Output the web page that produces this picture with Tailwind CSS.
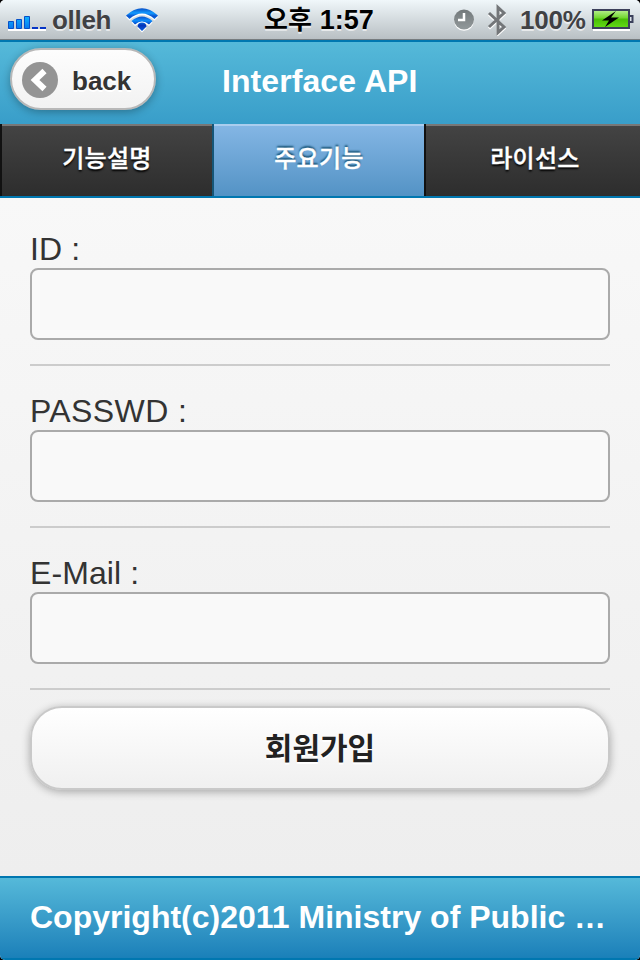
<!DOCTYPE html>
<html lang="ko">
<head>
<meta charset="utf-8">
<title>Interface API</title>
<script src="https://cdn.jsdelivr.net/npm/@tailwindcss/browser@4"></script>
</head>
<body class="bg-black">
<div class="w-[640px] h-[960px] flex flex-col overflow-hidden rounded-[5px] bg-[#f0f0f0] font-['Liberation_Sans','Noto_Sans_CJK_KR',sans-serif] text-[#333]">
  <div class="h-10 shrink-0 flex items-center border-b border-[#777c7f] bg-linear-to-b from-[#f0f7fa] to-[#b9c0c4] font-bold text-[#404144] [text-shadow:0_2px_0_rgba(255,255,255,.6)] whitespace-nowrap">
    <svg class="ml-[7px] w-10 h-6 shrink-0" viewBox="0 0 40 24">
      <defs><linearGradient id="sig" x1="0" y1="0" x2="0" y2="1"><stop offset="0" stop-color="#12b4ff"/><stop offset="1" stop-color="#0878ee"/></linearGradient></defs>
      <path d="M1 22h38" stroke="#fff" stroke-width="2"/>
      <g fill="url(#sig)" stroke="#0750c8" stroke-width="1"><path d="M1.500 13.500h5v7h-5zM9.500 11.500h5v9h-5zM17.500 8.500h5v12h-5z"/></g>
      <path d="M25 20h6M33 20h6" stroke="#0635c6" stroke-width="2"/>
    </svg>
    <span class="ml-[5px] mt-[2px] w-[74px] text-[26px] tracking-[-0.3px]">olleh</span>
    <svg class="w-8 h-[26px] shrink-0" viewBox="0 0 32 26">
      <defs><linearGradient id="wifi" x1="0" y1="1" x2="0" y2="24" gradientUnits="userSpaceOnUse"><stop offset="0" stop-color="#064bc4"/><stop offset=".22" stop-color="#139bff"/><stop offset=".36" stop-color="#0a50cc"/><stop offset=".55" stop-color="#0c8cfa"/><stop offset=".75" stop-color="#0533b8"/><stop offset="1" stop-color="#0860e0"/></linearGradient></defs>
      <path d="M0 8.500Q16-6 32 8.500L28.500 12Q16 1 3.500 12zM5.500 14Q16 5 26.500 14L23 17.500Q16 11.500 9 17.500zM11.500 19.500Q12 16 16 16T20.500 19.500L16 24z" fill="#fff" transform="translate(0 1.500)"/>
      <path d="M0 8.500Q16-6 32 8.500L28.500 12Q16 1 3.500 12zM5.500 14Q16 5 26.500 14L23 17.500Q16 11.500 9 17.500zM11.500 19.500Q12 15.500 16 15.500T20.500 19.500L16 24z" fill="url(#wifi)"/>
    </svg>
    <span class="ml-[106px] mt-px w-[189px] flex items-baseline text-[27px] text-black"><span class="text-[26px]">오후</span><span class="ml-[8px]">1:57</span></span>
    <svg class="w-[22px] h-[22px] shrink-0" viewBox="0 0 22 22">
      <defs><linearGradient id="clk" x1="0" y1="0" x2="0" y2="1"><stop offset="0" stop-color="#73797b"/><stop offset="1" stop-color="#92999b"/></linearGradient></defs>
      <circle cx="11" cy="12" r="9.800" fill="#fff"/><circle cx="11" cy="10.500" r="10" fill="url(#clk)"/><path d="M11 4v7H5" fill="none" stroke="#fff" stroke-width="2.500"/>
    </svg>
    <svg class="ml-[12px] w-5 h-8 shrink-0" viewBox="0 0 20 32">
      <path d="M2 9l15 14-6 5.500V3.500L17 9 2 23" fill="none" stroke="#fff" stroke-width="3" transform="translate(0 1.500)"/>
      <path d="M2 9l15 14-6 5.500V3.500L17 9 2 23" fill="none" stroke="#737679" stroke-width="3"/>
    </svg>
    <span class="ml-[13px] mt-px w-[72px] text-[26px] tracking-[-0.2px]">100%</span>
    <svg class="w-[42px] h-6 shrink-0" viewBox="0 0 42 24">
      <defs><linearGradient id="bat" x1="0" y1="0" x2="0" y2="1"><stop offset="0" stop-color="#b9ef92"/><stop offset=".45" stop-color="#6fd62c"/><stop offset=".5" stop-color="#48be05"/><stop offset="1" stop-color="#64dc18"/></linearGradient></defs>
      <path d="M1 22h37" stroke="#fff" stroke-width="2"/>
      <rect x="1" y="2" width="36" height="18" fill="url(#bat)" stroke="#3b405b" stroke-width="2"/>
      <path d="M38 8h2.500v6H38" fill="#dce2e8" stroke="#3b405b" stroke-width="2"/>
      <path d="M24 3L10 12.500h7L13 19l14-9.500h-8z" fill="#000"/>
    </svg>
  </div>

  <header class="h-[158px] shrink-0 flex flex-col border-y-2 border-[#0077b0] bg-linear-to-b from-[#55b9d9] to-[#1b86bb]">
    <div class="h-[82px] shrink-0 flex items-start pt-[6px] pl-[10px]">
      <a class="w-[146px] h-[62px] flex items-center rounded-full border-2 border-[#b8b8b8] bg-linear-to-b from-[#fdfdfd] to-[#f2f2f2] pl-[10px] shadow-[0_2px_8px_rgba(0,0,0,.3)]">
        <svg class="w-9 h-9 mt-[2px]" viewBox="0 0 36 36"><circle cx="18" cy="18" r="18" fill="#949494"/><path d="M22.500 9L13 18l9.500 9" fill="none" stroke="#fff" stroke-width="6" stroke-linejoin="miter"/></svg>
        <span class="ml-[14px] mt-[4px] text-[26px] font-bold [text-shadow:0_2px_0_#fff]">back</span>
      </a>
      <h1 class="ml-[66px] mt-[15px] text-[32px] leading-9 font-bold tracking-[0.08px] text-white">Interface API</h1>
    </div>
    <nav class="h-[72px] grid grid-cols-[212px_212px_216px] text-center text-[24px] leading-[70px] font-medium tracking-[0.3px] text-white">
      <a class="border-l-2 border-l-[#111] bg-linear-to-b from-[#444] to-[#2d2d2d] shadow-[inset_0_2px_0_#777] [-webkit-text-stroke:0.4px_white] [text-shadow:0_2px_2px_#000]">기능설명</a>
      <a class="border-l-2 border-l-[#155678] bg-linear-to-b from-[#85b7e5] to-[#5393c5] shadow-[inset_0_2px_0_#aacdee] [-webkit-text-stroke:0.4px_white] [text-shadow:0_-2px_2px_#145072]">주요기능</a>
      <a class="border-l-2 border-l-[#111] bg-linear-to-b from-[#444] to-[#2d2d2d] pl-1 shadow-[inset_0_2px_0_#777] [-webkit-text-stroke:0.4px_white] [text-shadow:0_2px_2px_#000]">라이선스</a>
    </nav>
  </header>

  <main class="flex-1 px-[30px] pt-8 bg-linear-to-b from-[#f8f8f8] to-[#eee]">
    <div class="h-[136px] border-b-2 border-[#ccc]">
      <label for="uid" class="block h-[38px] text-[32px] leading-[38px] tracking-[0.1px]">ID :</label>
      <input id="uid" class="block w-full h-[72px] rounded-lg border-2 border-[#aaa] bg-[#f9f9f9]">
    </div>
    <div class="mt-[26px] h-[136px] border-b-2 border-[#ccc]">
      <label for="pw" class="block h-[38px] text-[32px] leading-[38px] tracking-[0.4px]">PASSWD :</label>
      <input id="pw" type="password" class="block w-full h-[72px] rounded-lg border-2 border-[#aaa] bg-[#f9f9f9]">
    </div>
    <div class="mt-[26px] h-[136px] border-b-2 border-[#ccc]">
      <label for="mail" class="block h-[38px] text-[32px] leading-[38px] tracking-[0.1px]">E-Mail :</label>
      <input id="mail" class="block w-full h-[72px] rounded-lg border-2 border-[#aaa] bg-[#f9f9f9]">
    </div>
    <button class="mt-4 w-full h-[84px] rounded-[32px] border-2 border-[#c9c9c9] bg-linear-to-b from-white to-[#f0f0f0] pt-px text-[30px] font-bold text-[#222] [text-shadow:0_2px_0_#fff] shadow-[0_2px_8px_rgba(0,0,0,.3)]">회원가입</button>
  </main>

  <footer class="h-[84px] shrink-0 border-y-2 border-[#0077b0] bg-linear-to-b from-[#55b9d9] to-[#1a80b9] px-[30px]">
    <h2 class="truncate text-[32px] leading-[78px] font-bold text-white">Copyright(c)2011 Ministry of Public …</h2>
  </footer>
</div>
</body>
</html>
